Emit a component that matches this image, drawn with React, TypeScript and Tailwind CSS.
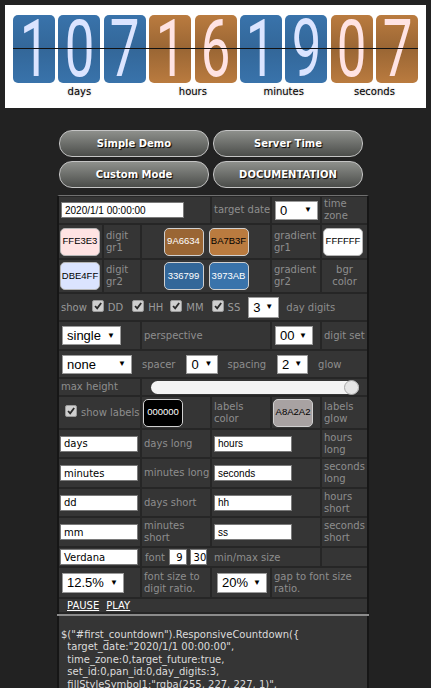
import React from "react";

const LF = "font-['Liberation_Sans',Arial,sans-serif]";
const LBL = "pl-[2px] text-[10px] leading-[12px] text-[#8e8e8e] whitespace-nowrap";

function Card({ d, tone }: { d: string; tone: "blue" | "orange" }) {
  const bg =
    tone === "blue"
      ? "bg-[linear-gradient(to_bottom,#3973AB,#336799_50%,#3973AB)] text-[#DBE4FF]"
      : "bg-[linear-gradient(to_bottom,#BA7B3F,#9A6634_50%,#BA7B3F)] text-[#FFE3E3]";
  return (
    <div className={`w-[42px] h-[68px] rounded-[5px] flex items-center justify-center ${bg}`}>
      <span className="inline-block font-['Roboto',sans-serif] font-normal text-[80px] leading-[68px] scale-x-[0.66]">
        {d}
      </span>
    </div>
  );
}

function Group({ digits, tone, label }: { digits: string; tone: "blue" | "orange"; label: string }) {
  return (
    <div className="flex flex-col items-center">
      <div className="flex gap-[3.4px]">
        {digits.split("").map((d, i) => (
          <Card key={i} d={d} tone={tone} />
        ))}
      </div>
      <div className="mt-[3px] text-[10px] leading-[12px] text-black [text-shadow:0_0_2px_#A8A2A2]">{label}</div>
    </div>
  );
}

function Btn({ children }: { children: React.ReactNode }) {
  return (
    <div className="h-[27px] rounded-[13px] border border-[#c4c4c4] bg-[linear-gradient(to_bottom,#8e908c,#4b4d4a)] flex items-center justify-center text-white font-bold text-[10px] [text-shadow:1px_1px_1px_#000]">
      {children}
    </div>
  );
}

function Cell({ w, className = "", children }: { w: string; className?: string; children?: React.ReactNode }) {
  return <div className={`h-full bg-[#353535] flex items-center ${w} ${className}`}>{children}</div>;
}

function Swatch({ hex, cls }: { hex: string; cls: string }) {
  return (
    <div className={`w-[40px] h-[28px] rounded-[5px] border flex items-center justify-center text-[9.5px] ${LF} ${cls}`}>
      {hex}
    </div>
  );
}

function Sel({ v, w, className = "" }: { v: string; w: string; className?: string }) {
  return (
    <div
      className={`${w} h-[19px] bg-white border border-[#9a9a9a] flex items-center justify-between pl-[4px] pr-[5px] text-[13px] leading-none text-black ${LF} ${className}`}
    >
      <span>{v}</span>
      <span className="text-[8px]">▼</span>
    </div>
  );
}

function Inp({ v, w, f = "", className = "" }: { v: string; w: string; f?: string; className?: string }) {
  return (
    <div className={`${w} h-[16px] bg-white border border-[#7a7a7a] flex items-center pl-[3px] text-[10px] text-black ${f} ${className}`}>
      {v}
    </div>
  );
}

function Cb({ className = "" }: { className?: string }) {
  return (
    <span className={`w-[12px] h-[12px] rounded-[2px] bg-[#cfcfcf] border border-[#9a9a9a] flex items-center justify-center shrink-0 ${className}`}>
      <svg viewBox="0 0 12 12" className="w-[10px] h-[10px]">
        <path d="M2.5 6 L5 8.8 L9.8 2.4" fill="none" stroke="#2a2a2a" strokeWidth="2.2" />
      </svg>
    </span>
  );
}

const code = [
  '$("#first_countdown").ResponsiveCountdown({',
  '  target_date:"2020/1/1 00:00:00",',
  "  time_zone:0,target_future:true,",
  "  set_id:0,pan_id:0,day_digits:3,",
  '  fillStyleSymbol1:"rgba(255, 227, 227, 1)",',
  '  fillStyleSymbol2:"rgba(219, 228, 255, 1)",',
  '  fillStylesPanel_g1_1:"rgba(154, 102, 52, 1)",',
];

export default function App() {
  return (
    <div className="min-h-screen bg-[#222222] pt-[5px] pb-[20px] font-['DejaVu_Sans',Verdana,sans-serif]">
      {/* countdown */}
      <div className="mx-[5px] h-[103px] bg-white pt-[10px] pl-[8px]">
        <div className="relative flex gap-[3.4px] w-max">
          <Group digits="107" tone="blue" label="days" />
          <Group digits="16" tone="orange" label="hours" />
          <Group digits="19" tone="blue" label="minutes" />
          <Group digits="07" tone="orange" label="seconds" />
          <div className="absolute left-0 right-0 top-[33px] h-[1px] bg-[#111]" />
        </div>
      </div>

      {/* panel */}
      <div className="ml-[57px] w-[312px] mt-[22px]">
        <div className="px-[2px] w-[308px] grid grid-cols-[150px_150px] gap-[4px]">
          <Btn>Simple Demo</Btn>
          <Btn>Server Time</Btn>
          <Btn>Custom Mode</Btn>
          <Btn>DOCUMENTATION</Btn>
        </div>

        <div className="mt-[7px] bg-[#262626] border-t border-t-[#707070] border-x-2 border-x-[#161616] pt-[1px] pb-[2px] flex flex-col gap-[2px]">
          {/* row 1 */}
          <div className="flex gap-[2px] h-[26px]">
            <Cell w="w-[151px]">
              <Inp v="2020/1/1 00:00:00" w="w-[123px]" f={`${LF} text-[10.5px]`} className="ml-[2px]" />
            </Cell>
            <Cell w="w-[58px]">
              <span className={LBL}>target date</span>
            </Cell>
            <Cell w="w-[48px]">
              <Sel v="0" w="w-[43px]" className="ml-[3px]" />
            </Cell>
            <Cell w="w-[45px]">
              <span className={LBL}>
                time
                <br />
                zone
              </span>
            </Cell>
          </div>
          {/* row 2 */}
          <div className="flex gap-[2px] h-[33px]">
            <Cell w="w-[43px]">
              <Swatch hex="FFE3E3" cls="ml-[1px] bg-[#FFE3E3] border-[#b5b5b5] text-black" />
            </Cell>
            <Cell w="w-[36px]">
              <span className={LBL}>
                digit
                <br />
                gr1
              </span>
            </Cell>
            <Cell w="w-[128px]" className="justify-center gap-[5px]">
              <Swatch hex="9A6634" cls="bg-[#9A6634] border-[#d0d0d0] text-white" />
              <Swatch hex="BA7B3F" cls="bg-[#BA7B3F] border-[#d0d0d0] text-black" />
            </Cell>
            <Cell w="w-[48px]">
              <span className={LBL}>
                gradient
                <br />
                gr1
              </span>
            </Cell>
            <Cell w="w-[45px]">
              <Swatch hex="FFFFFF" cls="ml-[1px] bg-white border-[#b5b5b5] text-black" />
            </Cell>
          </div>
          {/* row 3 */}
          <div className="flex gap-[2px] h-[32px]">
            <Cell w="w-[43px]">
              <Swatch hex="DBE4FF" cls="ml-[1px] bg-[#DBE4FF] border-[#b5b5b5] text-black" />
            </Cell>
            <Cell w="w-[36px]">
              <span className={LBL}>
                digit
                <br />
                gr2
              </span>
            </Cell>
            <Cell w="w-[128px]" className="justify-center gap-[5px]">
              <Swatch hex="336799" cls="bg-[#336799] border-[#d0d0d0] text-white" />
              <Swatch hex="3973AB" cls="bg-[#3973AB] border-[#d0d0d0] text-white" />
            </Cell>
            <Cell w="w-[48px]">
              <span className={LBL}>
                gradient
                <br />
                gr2
              </span>
            </Cell>
            <Cell w="w-[45px]" className="justify-center">
              <span className="text-[10px] leading-[12px] text-[#8e8e8e] text-center">
                bgr
                <br />
                color
              </span>
            </Cell>
          </div>
          {/* row 4 */}
          <div className="flex gap-[2px] h-[26px]">
            <Cell w="flex-1" className="text-[10px] text-[#9a9a9a]">
              <span className="ml-[2px]">show</span>
              <Cb className="ml-[5px] -mt-[3px]" />
              <span className="ml-[4px]">DD</span>
              <Cb className="ml-[9px] -mt-[3px]" />
              <span className="ml-[4px]">HH</span>
              <Cb className="ml-[7px] -mt-[3px]" />
              <span className="ml-[4px]">MM</span>
              <Cb className="ml-[8px] -mt-[3px]" />
              <span className="ml-[4px]">SS</span>
              <Sel v="3" w="w-[31px]" className="ml-[8px] h-[21px]" />
              <span className="ml-[7px] text-[#8e8e8e]">day digits</span>
            </Cell>
          </div>
          {/* row 5 */}
          <div className="flex gap-[2px] h-[27px]">
            <Cell w="w-[81px]">
              <Sel v="single" w="w-[59px]" className="ml-[3px]" />
            </Cell>
            <Cell w="w-[128px]">
              <span className={LBL}>perspective</span>
            </Cell>
            <Cell w="w-[48px]">
              <Sel v="00" w="w-[38px]" className="ml-[3px]" />
            </Cell>
            <Cell w="w-[45px]">
              <span className={LBL}>digit set</span>
            </Cell>
          </div>
          {/* row 6 */}
          <div className="flex gap-[2px] h-[26px]">
            <Cell w="flex-1" className="text-[10px] text-[#8e8e8e]">
              <Sel v="none" w="w-[70px]" className="ml-[3px]" />
              <span className="ml-[10px]">spacer</span>
              <Sel v="0" w="w-[32px]" className="ml-[11px]" />
              <span className="ml-[9px]">spacing</span>
              <Sel v="2" w="w-[31px]" className="ml-[11px]" />
              <span className="ml-[10px]">glow</span>
            </Cell>
          </div>
          {/* row 7 */}
          <div className="flex gap-[2px] h-[16px]">
            <Cell w="w-[81px]">
              <span className={LBL}>max height</span>
            </Cell>
            <Cell w="w-[225px]">
              <div className="relative ml-[9px] w-[208px] h-[13px] rounded-full bg-[#f4f4f4]">
                <span className="absolute right-0 top-[-1px] w-[15px] h-[15px] rounded-full bg-[#e6e6e6] border border-[#a8a8a8]" />
              </div>
            </Cell>
          </div>
          {/* row 8 */}
          <div className="flex gap-[2px] h-[31px]">
            <Cell w="w-[81px]">
              <Cb className="ml-[6px] -mt-[4px]" />
              <span className="ml-[4px] text-[10px] text-[#8e8e8e] whitespace-nowrap">show labels</span>
            </Cell>
            <Cell w="w-[68px]">
              <Swatch hex="000000" cls="ml-[1px] h-[27px] bg-black border-[#d0d0d0] text-white" />
            </Cell>
            <Cell w="w-[58px]">
              <span className={LBL}>
                labels
                <br />
                color
              </span>
            </Cell>
            <Cell w="w-[48px]">
              <Swatch hex="A8A2A2" cls="ml-[1px] h-[27px] bg-[#A8A2A2] border-[#d0d0d0] text-black" />
            </Cell>
            <Cell w="w-[45px]">
              <span className={LBL}>
                labels
                <br />
                glow
              </span>
            </Cell>
          </div>
          {/* rows 9-12 */}
          {[
            { a: "days", al: "days long", b: "hours", bl: ["hours", "long"], h: "h-[27px]", two: false },
            { a: "minutes", al: "minutes long", b: "seconds", bl: ["seconds", "long"], h: "h-[28px]", two: false },
            { a: "dd", al: "days short", b: "hh", bl: ["hours", "short"], h: "h-[27px]", two: false },
            { a: "mm", al: "minutes short", b: "ss", bl: ["seconds", "short"], h: "h-[28px]", two: true },
          ].map((r) => (
            <div key={r.a} className={`flex gap-[2px] ${r.h}`}>
              <Cell w="w-[81px]">
                <Inp v={r.a} w="w-[78px]" className="ml-[1px]" />
              </Cell>
              <Cell w="w-[68px]">
                {r.two ? (
                  <span className={LBL}>
                    minutes
                    <br />
                    short
                  </span>
                ) : (
                  <span className={LBL}>{r.al}</span>
                )}
              </Cell>
              <Cell w="w-[108px]">
                <Inp v={r.b} w="w-[78px]" f={`${LF} text-[10.5px]`} className="ml-[2px]" />
              </Cell>
              <Cell w="w-[45px]">
                <span className={LBL}>
                  {r.bl[0]}
                  <br />
                  {r.bl[1]}
                </span>
              </Cell>
            </div>
          ))}
          {/* row 13 */}
          <div className="flex gap-[2px] h-[18px]">
            <Cell w="w-[81px]">
              <Inp v="Verdana" w="w-[78px]" className="ml-[1px]" />
            </Cell>
            <Cell w="w-[178px]" className="text-[10px] text-[#8e8e8e]">
              <span className="ml-[3px]">font</span>
              <Inp v="9" w="w-[18px]" className="ml-[4px] justify-center pl-0" />
              <Inp v="30" w="w-[17px]" className="ml-[3px] justify-center pl-0" />
              <span className="ml-[7px]">min/max size</span>
            </Cell>
            <Cell w="w-[45px]" />
          </div>
          {/* row 14 */}
          <div className="flex gap-[2px] h-[29px]">
            <Cell w="w-[81px]">
              <Sel v="12.5%" w="w-[62px]" className="ml-[3px] h-[20px]" />
            </Cell>
            <Cell w="w-[68px]">
              <span className={LBL}>
                font size to
                <br />
                digit ratio.
              </span>
            </Cell>
            <Cell w="w-[58px]">
              <Sel v="20%" w="w-[50px]" className="ml-[5px] h-[20px]" />
            </Cell>
            <Cell w="w-[95px]">
              <span className={LBL}>
                gap to font size
                <br />
                ratio.
              </span>
            </Cell>
          </div>
          {/* row 15 */}
          <div className="flex gap-[2px] h-[13px]">
            <Cell w="flex-1" className="text-[10px] text-white">
              <span className="ml-[8px] underline">PAUSE</span>
              <span className="ml-[7px] underline">PLAY</span>
            </Cell>
          </div>
        </div>
        <div className="h-[2px] bg-[#8c8c8c]" />
        <div className="bg-[#353535] border-x-2 border-x-[#161616] pt-[13px] pl-[2px] pb-[10px] text-[10px] leading-[12.4px] text-[#dcdcdc] whitespace-pre">
          {code.map((l, i) => (
            <div key={i}>{l}</div>
          ))}
        </div>
      </div>
    </div>
  );
}
